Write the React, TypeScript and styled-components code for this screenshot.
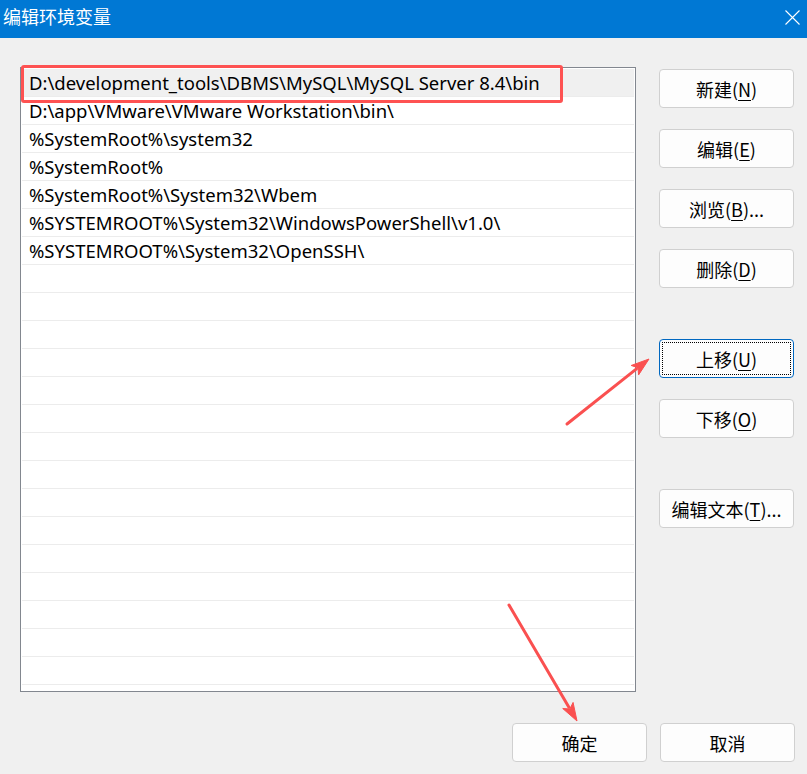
import React from "react";
import styled, { createGlobalStyle } from "styled-components";

const GlobalStyle = createGlobalStyle`
  html, body {
    margin: 0;
    padding: 0;
    background: #f0f0f0;
  }
  body {
    width: 807px;
    height: 774px;
    overflow: hidden;
    font-family: "Noto Sans", "Noto Sans CJK SC", sans-serif;
  }
`;

const Window = styled.div`
  position: relative;
  width: 807px;
  height: 774px;
  background: #f0f0f0;
  display: flex;
  flex-direction: column;
`;

const TitleBar = styled.div`
  height: 38px;
  background: #0078d4;
  display: flex;
  align-items: center;
  justify-content: space-between;
  padding: 0 7px 0 3px;
  box-sizing: border-box;
  color: #fff;
`;

const Title = styled.span`
  font-family: "Noto Sans CJK SC", sans-serif;
  font-size: 18px;
  line-height: 18px;
  margin-top: -6px;
`;

const CloseIcon = styled.svg`
  width: 15px;
  height: 15px;
  margin-top: -3px;
`;

const Body = styled.div`
  flex: 1;
  display: flex;
  flex-direction: column;
  padding: 29px 12px 0 20px;
`;

const Main = styled.div`
  display: flex;
  gap: 23px;
`;

const ListBox = styled.div`
  width: 616px;
  height: 625px;
  box-sizing: border-box;
  border: 1px solid #82878f;
  background: #fff;
  padding: 1px 1px 0 1px;
  overflow: hidden;
`;

const Row = styled.div<{ $selected?: boolean }>`
  height: 28px;
  box-sizing: border-box;
  display: flex;
  align-items: center;
  padding-left: 7px;
  font-family: "Noto Sans", sans-serif;
  font-size: 18.5px;
  color: #000;
  white-space: nowrap;
  background: ${(p) => (p.$selected ? "#f0f0f0" : "#fff")};
  border-bottom: 1px solid #ececec;
`;

const ButtonColumn = styled.div`
  display: flex;
  flex-direction: column;
  padding-top: 2px;
`;

const Button = styled.button<{ $focused?: boolean; $gapBefore?: number }>`
  position: relative;
  width: 135px;
  height: 39px;
  margin-top: ${(p) => p.$gapBefore ?? 0}px;
  box-sizing: border-box;
  background: #fdfdfd;
  border: 1px solid ${(p) => (p.$focused ? "#0067c0" : "#d0d0d0")};
  border-radius: 4px;
  font-family: "Noto Sans CJK SC", sans-serif;
  font-size: 18px;
  color: #000;
  padding: 0;
  display: flex;
  align-items: center;
  justify-content: center;
  ${(p) =>
    p.$focused &&
    `
    &::after {
      content: "";
      position: absolute;
      inset: 2px;
      border: 1px dotted #000;
      border-radius: 1px;
    }
  `}
`;

const Key = styled.span`
  text-decoration: underline;
  text-underline-offset: 3px;
  text-decoration-thickness: 1px;
`;

const Footer = styled.div`
  display: flex;
  justify-content: flex-end;
  gap: 13px;
  margin-top: 31px;
`;

const Highlight = styled.div`
  position: absolute;
  left: 21px;
  top: 65px;
  width: 542px;
  height: 38px;
  box-sizing: border-box;
  border: 3px solid #fe5252;
  border-radius: 3px;
  pointer-events: none;
`;

const Annotations = styled.svg`
  position: absolute;
  left: 0;
  top: 0;
  width: 807px;
  height: 774px;
  pointer-events: none;
`;

const paths = [
  "D:\\development_tools\\DBMS\\MySQL\\MySQL Server 8.4\\bin",
  "D:\\app\\VMware\\VMware Workstation\\bin\\",
  "%SystemRoot%\\system32",
  "%SystemRoot%",
  "%SystemRoot%\\System32\\Wbem",
  "%SYSTEMROOT%\\System32\\WindowsPowerShell\\v1.0\\",
  "%SYSTEMROOT%\\System32\\OpenSSH\\",
];

const TOTAL_ROWS = 23;

type Action = { label: string; key: string; suffix?: string; gap: number; focused?: boolean };

const actions: Action[] = [
  { label: "新建", key: "N", gap: 0 },
  { label: "编辑", key: "E", gap: 21 },
  { label: "浏览", key: "B", suffix: "...", gap: 21 },
  { label: "删除", key: "D", gap: 21 },
  { label: "上移", key: "U", gap: 51, focused: true },
  { label: "下移", key: "O", gap: 21 },
  { label: "编辑文本", key: "T", suffix: "...", gap: 51 },
];

function Arrow({ x1, y1, x2, y2 }: { x1: number; y1: number; x2: number; y2: number }) {
  const dx = x2 - x1;
  const dy = y2 - y1;
  const len = Math.hypot(dx, dy);
  const ux = dx / len;
  const uy = dy / len;
  const headLen = 18;
  const headW = 6;
  const bx = x2 - ux * headLen;
  const by = y2 - uy * headLen;
  const px = -uy;
  const py = ux;
  return (
    <g fill="#fa5050" stroke="#fa5050">
      <line x1={x1} y1={y1} x2={bx + ux * 2} y2={by + uy * 2} strokeWidth={3} strokeLinecap="round" />
      <polygon
        points={`${x2},${y2} ${bx + px * headW},${by + py * headW} ${bx + ux * 4},${by + uy * 4} ${bx - px * headW},${by - py * headW}`}
        strokeWidth={1}
        strokeLinejoin="round"
      />
    </g>
  );
}

export default function App() {
  const rows = Array.from({ length: TOTAL_ROWS }, (_, i) => paths[i] ?? "");
  return (
    <Window>
      <GlobalStyle />
      <TitleBar>
        <Title>编辑环境变量</Title>
        <CloseIcon viewBox="0 0 15 15">
          <path d="M0.5 0.5 L14.5 14.5 M14.5 0.5 L0.5 14.5" stroke="#fff" strokeWidth={1.1} fill="none" />
        </CloseIcon>
      </TitleBar>
      <Body>
        <Main>
          <ListBox>
            {rows.map((p, i) => (
              <Row key={i} $selected={i === 0}>
                {p}
              </Row>
            ))}
          </ListBox>
          <ButtonColumn>
            {actions.map((a) => (
              <Button key={a.key} $gapBefore={a.gap} $focused={a.focused}>
                {a.label}(<Key>{a.key}</Key>){a.suffix ?? ""}
              </Button>
            ))}
          </ButtonColumn>
        </Main>
        <Footer>
          <Button>确定</Button>
          <Button>取消</Button>
        </Footer>
      </Body>
      <Highlight />
      <Annotations viewBox="0 0 807 774">
        <Arrow x1={567} y1={424} x2={649} y2={359} />
        <Arrow x1={509} y1={605} x2={577} y2={721} />
      </Annotations>
    </Window>
  );
}
